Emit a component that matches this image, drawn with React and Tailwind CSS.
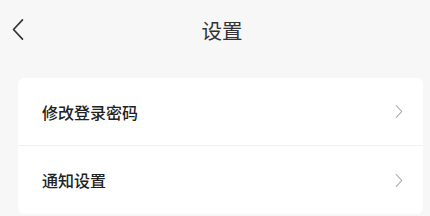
const Chevron = ({ className, dir = 'right' }) => (
  <svg
    viewBox="0 0 10 18"
    className={className}
    fill="none"
    stroke="currentColor"
    strokeWidth="1.3"
    strokeLinecap="round"
    strokeLinejoin="round"
  >
    {dir === 'right' ? <path d="M1.5 1.5 L8.5 9 L1.5 16.5" /> : <path d="M8.5 1.5 L1.5 9 L8.5 16.5" />}
  </svg>
);

const rows = ['修改登录密码', '通知设置'];

export default function App() {
  return (
    <div
      className="w-[430px] h-[216px] bg-[#f7f7f7] overflow-hidden"
      style={{ fontFamily: '"Noto Sans CJK SC", "Noto Sans", sans-serif' }}
    >
      {/* header */}
      <div className="relative h-[60px] flex items-center justify-center">
        <Chevron dir="left" className="absolute left-[11px] top-[18px] w-[14px] h-[23px] text-[#333]" />
        <span className="ml-[14px] text-[20.5px] text-[#333] leading-none">设置</span>
      </div>

      {/* list card */}
      <div className="mt-[18px] ml-[18px] mr-[7px] bg-white rounded-[6px]">
        {rows.map((label, i) => (
          <div
            key={label}
            className={`h-[68px] flex items-center justify-between pl-[24px] pr-[20px] ${
              i < rows.length - 1 ? 'border-b border-[#f0f0f0]' : ''
            }`}
          >
            <span className="text-[16px] font-medium text-[#222] leading-none">{label}</span>
            <Chevron className="w-[8px] h-[15px] text-[#a0a0a0]" />
          </div>
        ))}
      </div>
    </div>
  );
}
